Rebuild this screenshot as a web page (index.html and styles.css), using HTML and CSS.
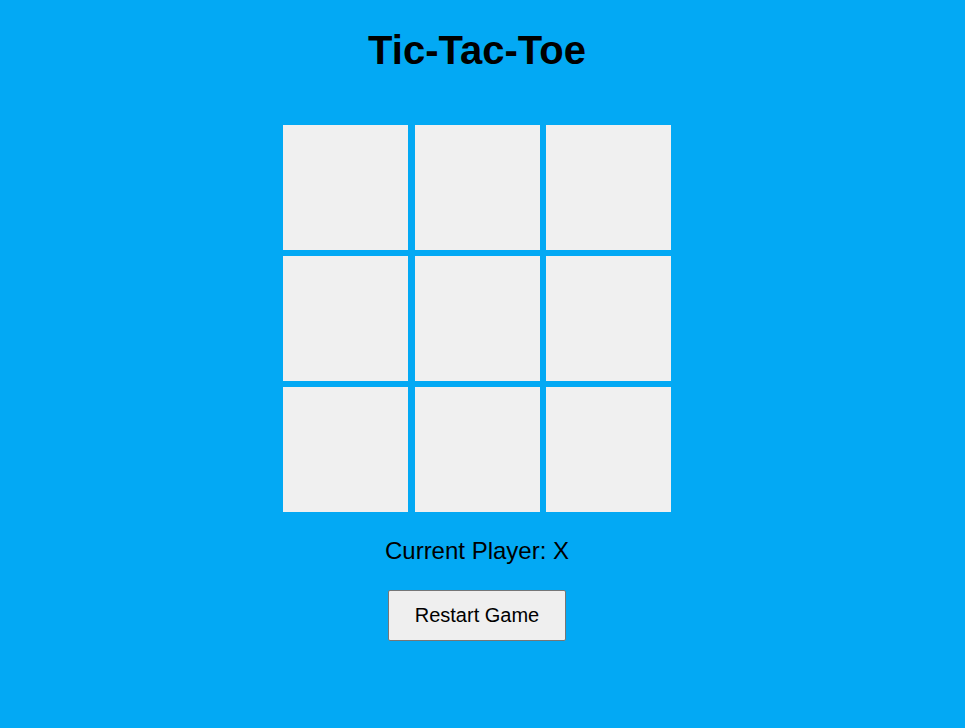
FILE: index.html
```html
<!DOCTYPE html>
<html lang="en">
<head>
<meta charset="utf-8">
<title>Tic-Tac-Toe</title>
<link rel="stylesheet" href="styles.css">
</head>
<body>
<main class="app">
  <h1 class="title">Tic-Tac-Toe</h1>
  <div class="board">
    <div class="cell"></div>
    <div class="cell"></div>
    <div class="cell"></div>
    <div class="cell"></div>
    <div class="cell"></div>
    <div class="cell"></div>
    <div class="cell"></div>
    <div class="cell"></div>
    <div class="cell"></div>
  </div>
  <p class="status">Current Player: X</p>
  <button class="restart" type="button">Restart Game</button>
</main>
</body>
</html>
```
FILE: styles.css
```css
html, body {
  margin: 0;
  background: #03a9f4;
}
body {
  font-family: "Liberation Sans", Arial, sans-serif;
  color: #000;
  padding-right: 11px;
}
.app {
  display: flex;
  flex-direction: column;
  align-items: center;
}
.title {
  margin: 27px 0 0;
  font-size: 40px;
  line-height: 46px;
  font-weight: bold;
}
.board {
  margin-top: 52px;
  display: grid;
  grid-template-columns: repeat(3, 125px);
  grid-auto-rows: 125px;
  column-gap: 6.5px;
  row-gap: 6px;
}
.cell {
  background: #f0f0f0;
}
.status {
  margin: 25px 0 0;
  font-size: 24px;
  line-height: 28px;
}
.restart {
  margin-top: 25px;
  font-family: "Liberation Sans", Arial, sans-serif;
  font-size: 20px;
  line-height: 23px;
  padding: 13px 26px;
  background: #efefef;
  color: #000;
  border: 1px solid #767676;
  border-radius: 2px;
}
```
